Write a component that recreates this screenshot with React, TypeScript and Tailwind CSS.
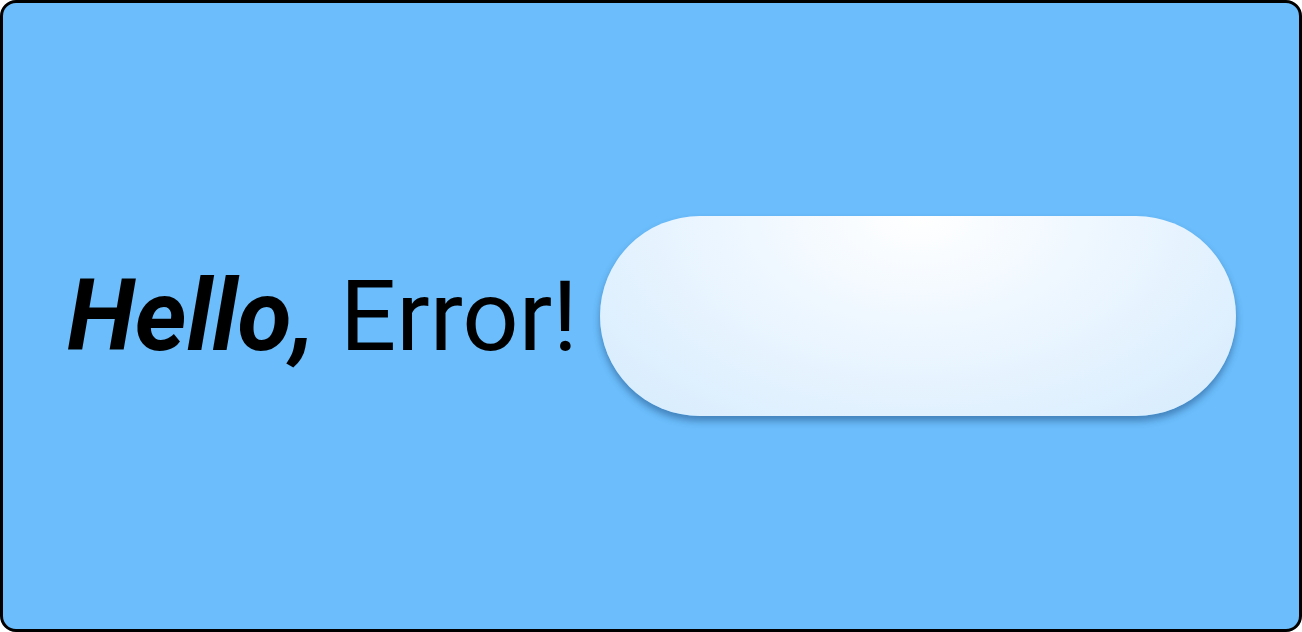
import React from 'react';

const App = () => {
    return (
        <div className="w-[1302px] h-[632px] bg-white">
            <div
                className="w-full h-full rounded-[16px] border-[3px] border-black bg-[#6bbdfb] flex items-center px-16 gap-[22px]"
                style={{ fontFamily: 'Roboto, "Liberation Sans", sans-serif' }}
            >
                <h1 className="text-[99px] leading-none text-black whitespace-nowrap">
                    <span className="font-bold italic">Hello,</span> Error!
                </h1>
                <div className="shrink-0 w-[636px] h-[200px] rounded-full bg-[radial-gradient(ellipse_at_50%_0%,#ffffff_0%,#ecf6ff_45%,#d5ebfd_100%)] shadow-[0_5px_7px_rgba(20,60,110,0.45)]"></div>
            </div>
        </div>
    );
};

export default App;
